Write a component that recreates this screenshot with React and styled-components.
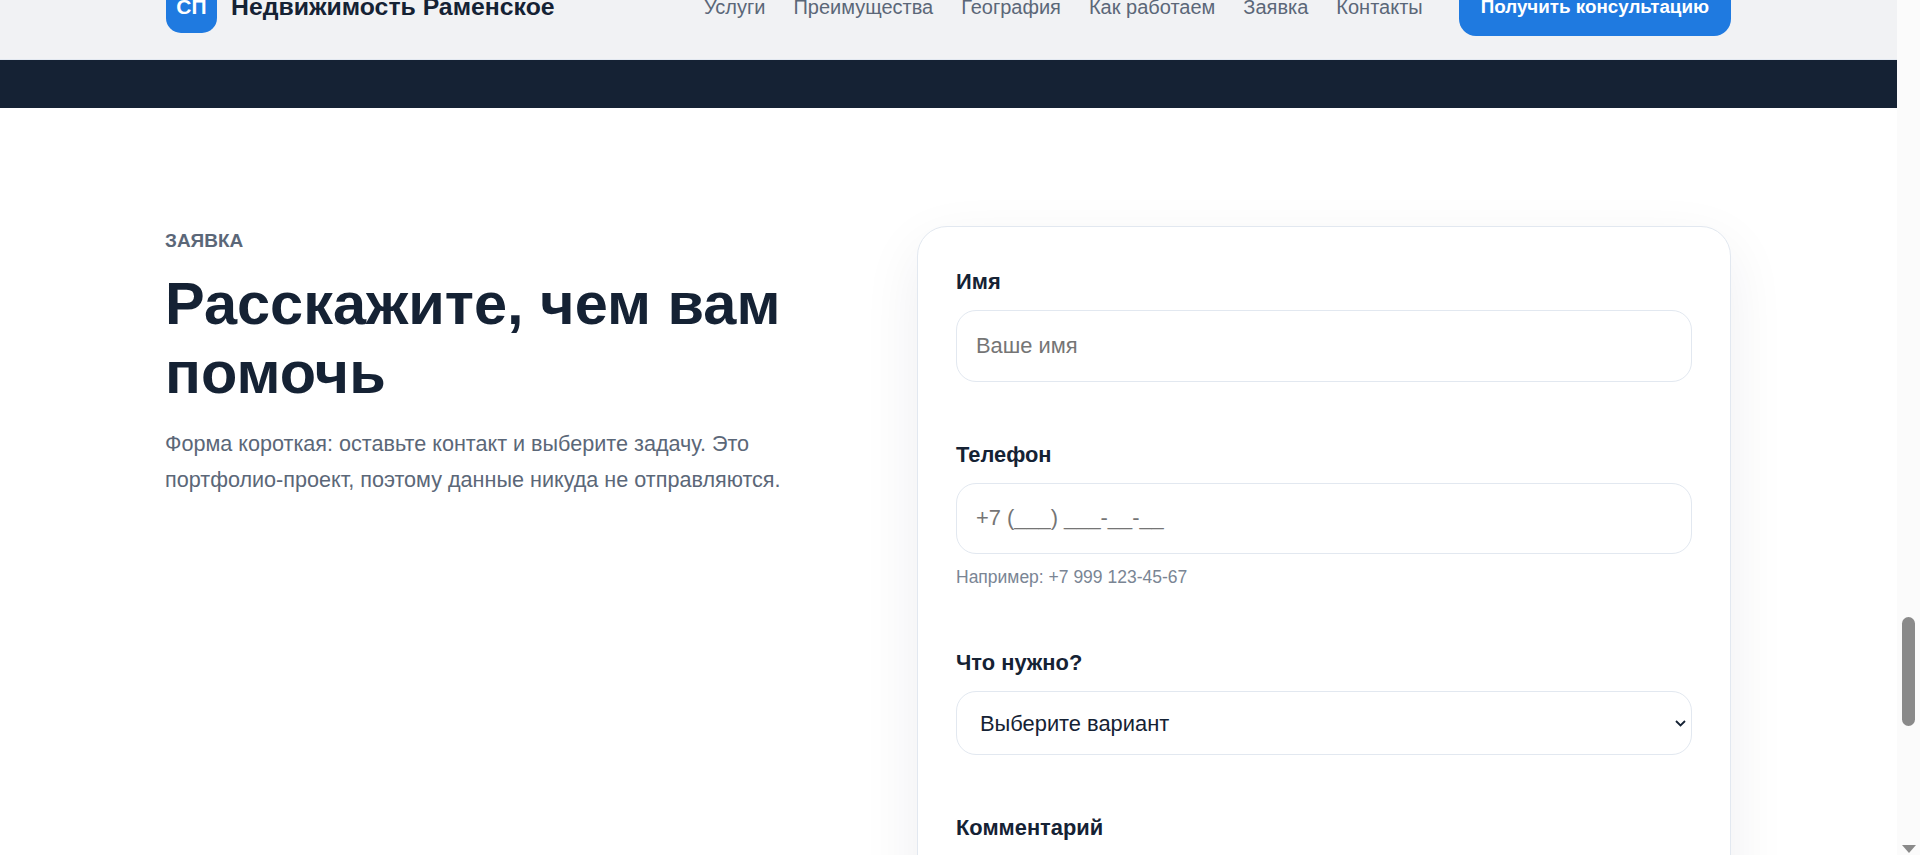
import React from 'react';
import styled, { createGlobalStyle } from 'styled-components';

const GlobalStyle = createGlobalStyle`
  html, body {
    margin: 0;
    height: 100%;
    overflow: hidden;
    background: #fff;
  }
  * {
    box-sizing: border-box;
  }
  body {
    font-family: "Liberation Sans", Arial, sans-serif;
    font-size: 20px;
    color: #152234;
  }
`;

const chevron = `url("data:image/svg+xml,%3Csvg xmlns='http://www.w3.org/2000/svg' width='11' height='7' viewBox='0 0 11 7'%3E%3Cpath d='M1 1l4.5 4.5L10 1' fill='none' stroke='%23152234' stroke-width='1.8'/%3E%3C/svg%3E")`;

const Page = styled.div`
  display: flex;
  height: 855px;
  overflow: hidden;
`;

const Main = styled.div`
  flex: 1;
  min-width: 0;
`;

const Header = styled.header`
  height: 105px;
  margin-top: -45px;
  background: #f1f2f4;
  border-bottom: 1px solid #e2e8f0;
`;

const Container = styled.div`
  width: 1565px;
  margin: 0 auto;
`;

const HeaderRow = styled(Container)`
  display: flex;
  align-items: center;
  justify-content: space-between;
  height: 104px;
`;

const Brand = styled.a`
  display: flex;
  align-items: center;
  gap: 14px;
  font-size: 24.8px;
  font-weight: 700;
  color: #152234;
`;

const BrandMark = styled.span`
  display: grid;
  place-items: center;
  width: 51px;
  height: 51px;
  border-radius: 15px;
  background: #1f7ae0;
  color: #fff;
  font-size: 21px;
`;

const NavRow = styled.nav`
  display: flex;
  align-items: center;
  gap: 28px;
`;

const NavLink = styled.a`
  color: #5b6778;
  font-size: 20px;
`;

const CallButton = styled.button`
  height: 58px;
  margin-left: 8px;
  padding: 0 22px;
  border: none;
  border-radius: 17px;
  background: #1f7ae0;
  color: #fff;
  font: 700 18.8px "Liberation Sans", Arial, sans-serif;
`;

const Band = styled.div`
  height: 48px;
  background: #152234;
`;

const Section = styled(Container)`
  display: grid;
  grid-template-columns: 1fr 814px;
  gap: 80px;
  padding-top: 118px;
`;

const Intro = styled.div`
  margin-left: -1px;
`;

const Eyebrow = styled.div`
  margin-top: 3px;
  color: #5b6778;
  font-size: 19px;
  font-weight: 700;
  line-height: 24px;
  text-transform: uppercase;
`;

const Title = styled.h2`
  margin: 16px 0 0;
  font-size: 59.5px;
  line-height: 69px;
  font-weight: 700;
  color: #152234;
`;

const Lead = styled.p`
  margin: 19px 0 0;
  color: #5b6778;
  font-size: 21.6px;
  line-height: 36px;
`;

const Card = styled.form`
  height: 800px;
  padding: 41px 38px;
  background: #fff;
  border: 1px solid #e2e8f0;
  border-radius: 30px;
  box-shadow: 0 20px 60px rgba(21, 34, 52, 0.07);
`;

const Field = styled.div`
  margin-bottom: 59px;
`;

const Label = styled.label`
  display: block;
  margin-bottom: 15px;
  font-size: 21.875px;
  font-weight: 700;
  line-height: 27px;
  color: #152234;
`;

const TextInput = styled.input`
  display: block;
  width: 100%;
  height: 71.5px;
  padding: 0 19px;
  border: 1px solid #e2e8f0;
  border-radius: 20px;
  outline: none;
  background: #fff;
  font: 21.875px "Liberation Sans", Arial, sans-serif;
  color: #152234;
`;

const Select = styled.select`
  display: block;
  width: 100%;
  height: 64px;
  padding: 0 0 0 23px;
  border: 1px solid #e2e8f0;
  border-radius: 20px;
  outline: none;
  appearance: none;
  background: #fff ${chevron} no-repeat right 5px center;
  font: 21.875px "Liberation Sans", Arial, sans-serif;
  color: #152234;
`;

const Hint = styled.div`
  margin-top: 11px;
  color: #7a8594;
  font-size: 17.5px;
  line-height: 25px;
`;

const ScrollTrack = styled.div`
  position: relative;
  flex: 0 0 23px;
  background: #fbfbfb;
`;

const ScrollThumb = styled.div`
  position: absolute;
  top: 617px;
  left: 5px;
  width: 13px;
  height: 109px;
  border-radius: 7px;
  background: #8a8a8a;
`;

const ScrollArrow = styled.div`
  position: absolute;
  left: 5px;
  bottom: 2px;
  width: 0;
  height: 0;
  border-left: 7px solid transparent;
  border-right: 7px solid transparent;
  border-top: 8px solid #8a8a8a;
`;

const links = ['Услуги', 'Преимущества', 'География', 'Как работаем', 'Заявка', 'Контакты'];

export default function App() {
  return (
    <Page>
      <GlobalStyle />
      <Main>
        <Header>
          <HeaderRow>
            <Brand>
              <BrandMark>СП</BrandMark>
              Недвижимость Раменское
            </Brand>
            <NavRow>
              {links.map(link => <NavLink key={link}>{link}</NavLink>)}
              <CallButton type="button">Получить консультацию</CallButton>
            </NavRow>
          </HeaderRow>
        </Header>
        <Band />
        <Section>
          <Intro>
            <Eyebrow>Заявка</Eyebrow>
            <Title>Расскажите, чем вам помочь</Title>
            <Lead>Форма короткая: оставьте контакт и выберите задачу. Это портфолио-проект, поэтому данные никуда не отправляются.</Lead>
          </Intro>
          <Card>
            <Field>
              <Label>Имя</Label>
              <TextInput placeholder="Ваше имя" />
            </Field>
            <Field>
              <Label>Телефон</Label>
              <TextInput placeholder="+7 (___) ___-__-__" />
              <Hint>Например: +7 999 123-45-67</Hint>
            </Field>
            <Field>
              <Label>Что нужно?</Label>
              <Select defaultValue="">
                <option value="">Выберите вариант</option>
              </Select>
            </Field>
            <Field>
              <Label>Комментарий</Label>
            </Field>
          </Card>
        </Section>
      </Main>
      <ScrollTrack>
        <ScrollThumb />
        <ScrollArrow />
      </ScrollTrack>
    </Page>
  );
}
